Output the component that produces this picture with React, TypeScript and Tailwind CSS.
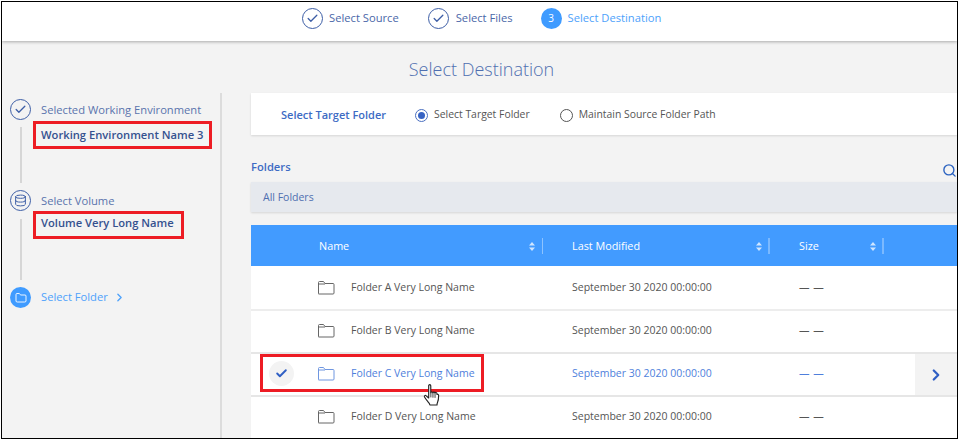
import { ChevronRight, Check, Search, Database, Folder } from "lucide-react";

const folders = [
  { name: "Folder A Very Long Name" },
  { name: "Folder B Very Long Name" },
  { name: "Folder C Very Long Name", selected: true },
  { name: "Folder D Very Long Name" },
];

const font = "font-['Open_Sans',sans-serif]";

const CheckCircle = () => (
  <span className="flex h-[21px] w-[21px] shrink-0 items-center justify-center rounded-full border-[1.5px] border-[#3d5ea6]">
    <Check size={13} strokeWidth={2.4} className="text-[#3d5ea6]" />
  </span>
);

const SortArrows = () => (
  <svg width="6" height="9" viewBox="0 0 6 9" className="shrink-0">
    <path d="M3 0L6 3.4H0Z M3 9L0 5.6H6Z" fill="#ffffff" fillOpacity="0.75" />
  </svg>
);

const FolderIcon = ({ color }: { color: string }) => (
  <svg width="17" height="14" viewBox="0 0 17 14" fill="none" stroke={color} strokeWidth="1">
    <path d="M.5 12V1.500a1 1 0 0 1 1-1h4l1.500 2h8a1 1 0 0 1 1 1V12a1 1 0 0 1-1 1h-14a1 1 0 0 1-1-1Z" />
    <path d="M.5 3h6.500" />
  </svg>
);

const HandCursor = () => (
  <svg width="18" height="25" viewBox="0 0 19 24" className="absolute top-[29px] left-[172px]">
    <path
      d="M6 1.600c0-1.400 2.200-1.400 2.200 0V9c.1-1 2.100-1 2.200.1.200-.9 2-.9 2.200.2.300-.8 2-.7 2.100.4v1.100c1-.4 1.800.2 1.800 1.300 0 3-.2 5.300-1.200 7.400-.4.900-.5 1.500-.5 2.500H7.300c-.2-1.300-.9-2-1.800-3.100-1.200-1.500-2.900-3.600-3.900-5.400-.6-1.200.8-2.100 1.800-1.100L6 14.600Z"
      fill="#ffffff"
      stroke="#222222"
      strokeWidth="1.200"
      strokeLinejoin="round"
    />
    <path d="M8.300 9v5M10.500 9.300v5M12.700 9.500v5" stroke="#222222" strokeWidth="0.900" />
  </svg>
);

export default function App() {
  return (
    <div className={`h-[440px] w-[960px] overflow-hidden bg-white pt-px pl-px ${font}`}>
      <div className="flex h-[438px] w-[957px] flex-col overflow-hidden border border-black bg-[#f3f3f3]">
        {/* stepper */}
        <div className="z-10 flex h-[39px] shrink-0 items-center bg-white pb-[6px] pl-[300px] text-[11.2px] shadow-[0_1px_3px_rgba(0,0,0,0.3)]">
          <CheckCircle />
          <span className="ml-[6px] text-[#4a67a8]">Select Source</span>
          <span className="ml-[29px]"><CheckCircle /></span>
          <span className="ml-[7px] text-[#4a67a8]">Select Files</span>
          <span className="ml-[28px] flex h-[21px] w-[21px] items-center justify-center rounded-full bg-[#3f9bff] text-[10px] text-white">3</span>
          <span className="ml-[6px] text-[#4ea2fb]">Select Destination</span>
        </div>

        <div className="flex flex-1 flex-col">
          <h1 className="pt-[16px] pl-[4px] text-center text-[18px] leading-[24px] font-light text-[#4f6fb0]">Select Destination</h1>

          <div className="mt-[12px] flex flex-1">
            {/* left steps */}
            <div className="flex h-full w-[220px] shrink-0 flex-col border-r-2 border-[#dcdcdc] pt-[6px] pl-[8px] text-[11.2px]">
              <div className="flex items-center gap-[10px]">
                <CheckCircle />
                <span className="pt-[2px] text-[#5a74ad]">Selected Working Environment</span>
              </div>
              <div className="flex h-[70px]">
                <span className="mt-[7px] ml-[10px] h-[56px] w-[2px] bg-[#d6d6d6]" />
                <div className="mt-[1px] ml-[11px] flex h-[28px] w-[179px] items-center border-[3px] border-[#ed1c24] pl-[5px] font-semibold whitespace-nowrap text-[#35518f]">
                  Working Environment Name 3
                </div>
              </div>
              <div className="flex items-center gap-[10px]">
                <span className="flex h-[21px] w-[21px] shrink-0 items-center justify-center rounded-full border-[1.5px] border-[#3d5ea6]">
                  <Database size={13} strokeWidth={1.8} className="text-[#3d5ea6]" />
                </span>
                <span className="pt-px text-[#5a74ad]">Select Volume</span>
              </div>
              <div className="flex h-[76px]">
                <span className="mt-[8px] ml-[10px] h-[61px] w-[2px] bg-[#d6d6d6]" />
                <div className="ml-[11px] flex h-[28px] w-[151px] items-center border-[3px] border-[#ed1c24] pb-[3px] pl-[5px] font-semibold whitespace-nowrap text-[#35518f]">
                  Volume Very Long Name
                </div>
              </div>
              <div className="flex items-center gap-[10px]">
                <span className="flex h-[21px] w-[21px] shrink-0 items-center justify-center rounded-full bg-[#3f9bff]">
                  <Folder size={12} strokeWidth={1.8} className="text-white" />
                </span>
                <span className="text-[#4ea2fb]">Select Folder</span>
                <ChevronRight size={13} strokeWidth={2.5} className="-ml-[5px] text-[#4ea2fb]" />
              </div>
            </div>

            {/* right content */}
            <div className="flex flex-1 flex-col pl-[29px]">
              <div className="flex h-[42px] shrink-0 items-center bg-white pt-[2px] pl-[30px] text-[10.4px] shadow-[0_1px_2px_rgba(0,0,0,0.12)]">
                <span className="text-[11px] font-semibold text-[#3d6bc4]">Select Target Folder</span>
                <span className="ml-[29px] flex h-[13px] w-[13px] items-center justify-center rounded-full border border-[#4a6fc0]">
                  <span className="h-[7px] w-[7px] rounded-full bg-[#3763c4]" />
                </span>
                <span className="ml-[6px] text-[#555555]">Select Target Folder</span>
                <span className="ml-[30px] h-[13px] w-[13px] rounded-full border border-[#555555]" />
                <span className="ml-[6px] text-[#555555]">Maintain Source Folder Path</span>
              </div>

              <div className="relative mt-[24px] flex h-[16px] shrink-0 items-center text-[11.2px] font-semibold text-[#3d6bc4]">
                Folders
                <Search size={15} strokeWidth={2.2} className="absolute top-[4px] right-0 text-[#2a62c0]" />
              </div>
              <div className="mt-[7px] flex h-[30px] shrink-0 items-center bg-[#e6e9ee] pt-[2px] pl-[12px] text-[10.5px] text-[#4f6fb0] shadow-[0_1px_2px_rgba(0,0,0,0.12)]">
                All Folders
              </div>

              {/* table */}
              <div className="mt-[13px] flex h-[41px] shrink-0 items-center bg-[#429bff] pt-px text-[10.8px] font-medium text-white">
                <div className="flex w-[292px] items-center pl-[68px]">
                  <span className="flex-1">Name</span>
                  <SortArrows />
                  <span className="ml-[7px] h-[16px] w-px bg-white/40" />
                </div>
                <div className="flex w-[227px] items-center pl-[29px]">
                  <span className="flex-1">Last Modified</span>
                  <SortArrows />
                  <span className="ml-[6px] h-[16px] w-[2px] bg-white/30" />
                </div>
                <div className="flex w-[114px] items-center pl-[29px]">
                  <span className="flex-1">Size</span>
                  <SortArrows />
                  <span className="ml-[6px] h-[16px] w-[2px] bg-white/30" />
                </div>
              </div>

              {folders.map((f, i) => (
                <div
                  key={f.name}
                  className={`relative flex h-[43px] shrink-0 items-center border-t-2 bg-white pb-[2px] text-[10.5px] ${
                    i === 0 ? "border-white" : f.selected || i === 3 ? "border-[#e6e6e6]" : "border-[#ededed]"
                  } ${f.selected ? "z-10 text-[#4f7fdc]" : "text-[#555555]"}`}
                >
                  <span className="ml-[67px]"><FolderIcon color={f.selected ? "#6f96e0" : "#666666"} /></span>
                  <span className="ml-[16px] w-[221px]">{f.name}</span>
                  <span className="w-[227px] whitespace-nowrap">September 30 2020 00:00:00</span>
                  <span className="tracking-[0.5px]">— —</span>
                  {f.selected ? (
                    <>
                      <div className="absolute top-0 left-[9px] flex h-[38px] w-[224px] items-center border-[3px] border-[#ed1c24] pl-[6px]">
                        <span className="flex h-[25px] w-[25px] items-center justify-center rounded-full bg-[#f3f3f3]">
                          <Check size={13} strokeWidth={3.5} className="text-[#2f5fc4]" />
                        </span>
                      </div>
                      <span className="absolute top-0 right-0 flex h-[41px] w-[42px] items-center justify-center bg-[#f3f3f3]">
                        <ChevronRight size={18} strokeWidth={3} className="text-[#2f5fc4]" />
                      </span>
                      <HandCursor />
                    </>
                  ) : null}
                </div>
              ))}
            </div>
          </div>
        </div>
      </div>
    </div>
  );
}
